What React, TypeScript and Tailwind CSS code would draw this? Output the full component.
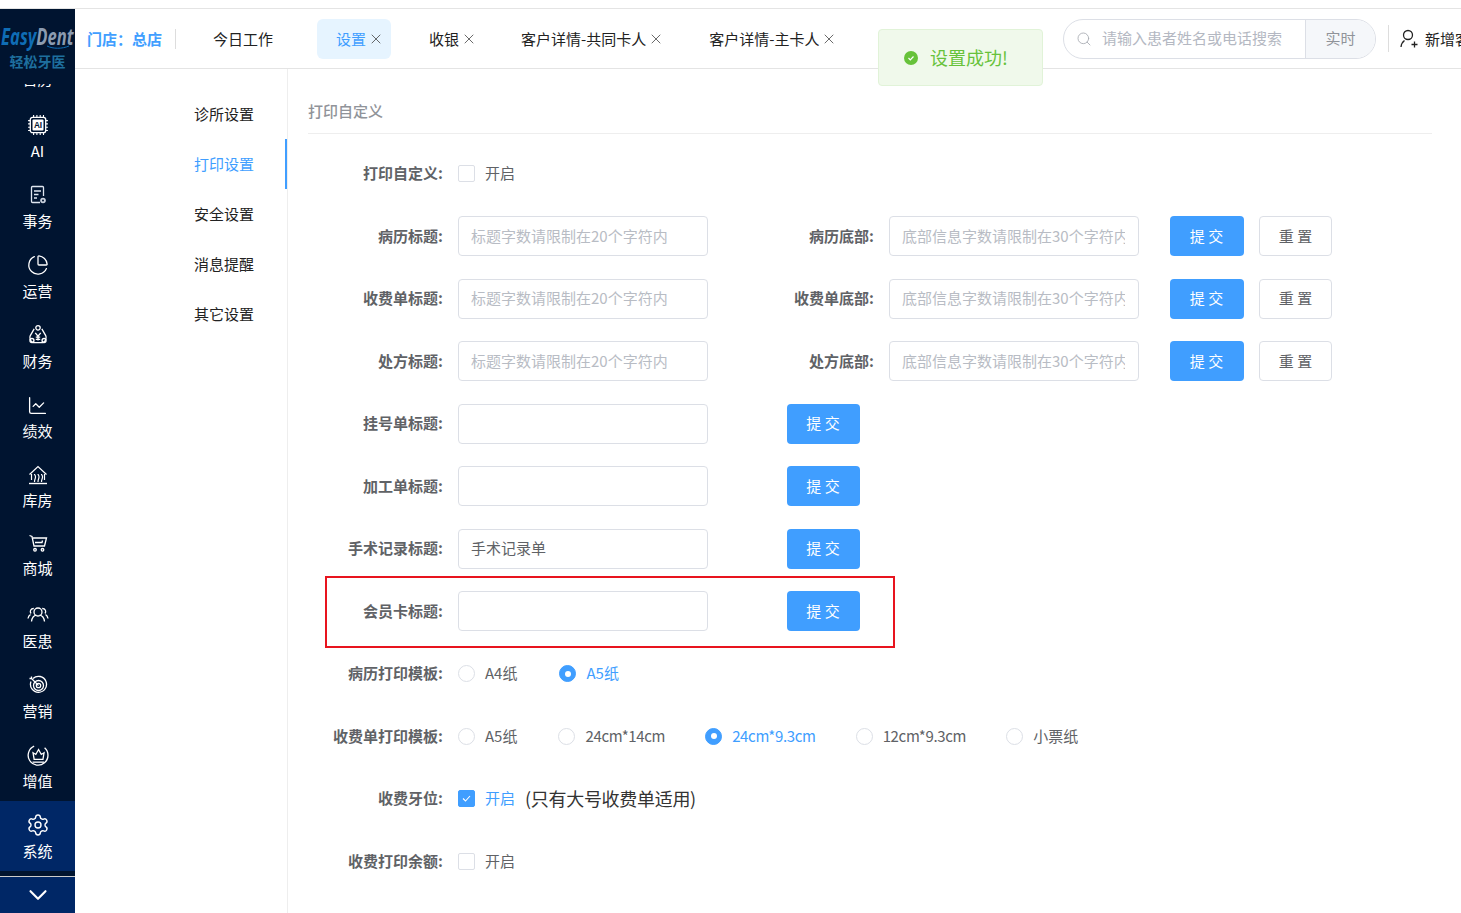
import * as React from 'react';
import { ChevronDown, ChartLine, ChartPie, Search, Settings, X } from 'lucide-react';

const font = 'font-["Noto_Sans_CJK_SC","Noto_Sans",sans-serif]';

function AiIcon() {
  return (
    <svg width="22" height="22" viewBox="0 0 20 20" fill="none" stroke="white" strokeWidth="1.2">
      <rect x="3" y="3" width="14" height="14" rx="2" />
      <path d="M6 1v2M9 1v2M12 1v2M15 1v2M6 17v2M9 17v2M12 17v2M15 17v2M1 6h2M1 9h2M1 12h2M1 15h2M17 6h2M17 9h2M17 12h2M17 15h2" strokeWidth="1" />
      <rect x="5" y="5" width="10" height="10" rx="1" fill="white" stroke="none" />
      <text x="10" y="13" textAnchor="middle" fontSize="7.5" fontWeight="700" fill="#001430" stroke="none" fontFamily="Liberation Sans">AI</text>
    </svg>
  );
}

function AffairIcon() {
  return (
    <svg width="20" height="20" viewBox="0 0 20 20" fill="none" stroke="#dfe6f0" strokeWidth="1.3">
      <path d="M12 17.5H4.500a1 1 0 0 1-1-1V2.500a1 1 0 0 1 1-1h10a1 1 0 0 1 1 1V11" />
      <path d="M6 6h7M6 9.500h4.500M6 13h3" />
      <circle cx="15" cy="15.500" r="2.800" fill="#c7cfdb" stroke="none" />
      <circle cx="15" cy="15.500" r="1" fill="#001430" stroke="none" />
    </svg>
  );
}

function FinanceIcon() {
  return (
    <svg width="22" height="22" viewBox="0 0 20 20" fill="none" stroke="white" strokeWidth="1.200">
      <path d="M6.500 4.500 3 10.500c-1 2 0 5.500 2.500 6.500h9c2.500-1 3.500-4.500 2.500-6.500l-3.500-6" />
      <circle cx="10" cy="3.500" r="2" />
      <circle cx="4.500" cy="15" r="1.800" />
      <circle cx="15.500" cy="15" r="1.800" />
      <path d="M7.500 8 10 11l2.500-3M10 11v4M8 12h4M8 14h4" />
    </svg>
  );
}

function StoreIcon() {
  return (
    <svg width="20" height="20" viewBox="0 0 20 20" fill="none" stroke="white" strokeWidth="1.200">
      <path d="M1.500 9.500 10 1.500l8.500 8M3.500 9v6M16.500 9v6" />
      <path d="M1 18.500h18" strokeWidth="1.400" />
      <path d="M6.500 17c0-3 1-3 1-5s-1-1.500-1-3M10 17c0-3 1-3 1-5s-1-1.500-1-3M13.500 17c0-3 1-3 1-5s-1-1.500-1-3" />
    </svg>
  );
}

function CartIcon() {
  return (
    <svg width="20" height="20" viewBox="0 0 20 20" fill="none" stroke="white" strokeWidth="1.300">
      <path d="M1.500 2.500 4 3.500l2 9.500h10.500l2-8H5" />
      <path d="M7 9.500h7l.5-2" />
      <circle cx="7" cy="16.800" r="1.300" />
      <circle cx="14.500" cy="16.800" r="1.300" />
    </svg>
  );
}

function PatientIcon() {
  return (
    <svg width="22" height="18" viewBox="0 0 22 18" fill="none" stroke="white" strokeWidth="1.300">
      <circle cx="11" cy="6" r="4" />
      <path d="M4.500 15.500c.5-4 3-6 5-6.300M17.500 15.500c-.5-4-3-6-5-6.300" />
      <path d="M6.800 2.500C3.500 2.500 2.500 5.500 4 7.500M1 12.500c.3-1.800 1.200-3.200 2.500-4M15.200 2.500c3.300 0 4.300 3 2.800 5M21 12.500c-.3-1.800-1.200-3.200-2.500-4" />
    </svg>
  );
}

function TargetIcon() {
  return (
    <svg width="20" height="20" viewBox="0 0 20 20" fill="none" stroke="white" strokeWidth="1.300">
      <path d="M5 3.500A8 8 0 1 1 3 6.500" />
      <circle cx="10.500" cy="10.500" r="5" />
      <circle cx="10.500" cy="10.500" r="2.200" />
      <path d="M10.500 10.500 3.500 3.500M1.500 3.500h2v-2" />
    </svg>
  );
}

function CrownIcon() {
  return (
    <svg width="22" height="22" viewBox="0 0 20 20" fill="none" stroke="white" strokeWidth="1.200">
      <path d="M6.500 2A9 9 0 1 0 16 3.500" />
      <path d="M5.500 8 8 9.500 10.500 5l2.500 4.500L15.500 8l-1 6h-8z" />
      <path d="M5 16.500h10.500" />
    </svg>
  );
}

const navItems = [
  { label: '日历', icon: null, cls: 'pt-[32px]', labelCls: 'mt-[5px]' },
  { label: 'AI', icon: <AiIcon />, cls: 'pt-[14px]', labelCls: 'mt-[5px]' },
  { label: '事务', icon: <AffairIcon />, cls: 'pt-[14px]', labelCls: 'mt-[5px]' },
  { label: '运营', icon: <ChartPie size={22} strokeWidth={1.4} />, cls: 'pt-[14px]', labelCls: 'mt-[5px]' },
  { label: '财务', icon: <FinanceIcon />, cls: 'pt-[14px]', labelCls: 'mt-[5px]' },
  { label: '绩效', icon: <ChartLine size={21} strokeWidth={1.5} />, cls: 'pt-[14px]', labelCls: 'mt-[5px]' },
  { label: '库房', icon: <StoreIcon />, cls: 'pt-[14px]', labelCls: 'mt-[4px]' },
  { label: '商城', icon: <CartIcon />, cls: 'pt-[12px]', labelCls: 'mt-[4px]' },
  { label: '医患', icon: <PatientIcon />, cls: 'pt-[14px]', labelCls: 'mt-[5px]' },
  { label: '营销', icon: <TargetIcon />, cls: 'pt-[14px]', labelCls: 'mt-[5px]' },
  { label: '增值', icon: <CrownIcon />, cls: 'pt-[14px]', labelCls: 'mt-[5px]' },
];

function Sidebar() {
  return (
    <aside className="flex h-[904px] w-[75px] shrink-0 flex-col overflow-hidden bg-[#001430] text-white">
      <div className="relative z-10 h-[75px] shrink-0 bg-[#001430] pt-[12px] text-center">
        <div className='flex justify-center whitespace-nowrap font-["Open_Sans",sans-serif] text-[23px] leading-[30px] font-bold italic'>
          <span className="inline-block scale-x-[0.72]">
            <span className="text-[#0f6db5]">Easy</span>
            <span className="text-[#8b9bb0]">Dent</span>
          </span>
        </div>
        <svg width="24" height="5" viewBox="0 0 24 5" fill="none" stroke="#0f6db5" strokeWidth="1" className="absolute top-[36px] left-[46px]">
          <path d="M1 1c6 3 15 3 22 0" />
        </svg>
        <div className="mt-[1px] text-[14px] leading-[18px] font-bold text-[#1e6f9e]">轻松牙医</div>
      </div>
      <div className="min-h-0 flex-1 overflow-hidden">
        <div className="-mt-[53px]">
          {navItems.map((item) => (
            <div key={item.label} className={`flex h-[70px] flex-col items-center ${item.cls}`}>
              {item.icon && <div className="flex h-5 items-center justify-center">{item.icon}</div>}
              <span className={`${item.labelCls} text-[15px] leading-[22px]`}>{item.label}</span>
            </div>
          ))}
        </div>
      </div>
    </aside>
  );
}

function Tab({ label, active, close = true, className = '' }: { label: string; active?: boolean; close?: boolean; className?: string }) {
  return (
    <div className={`flex h-10 shrink-0 items-center rounded-md ${active ? 'bg-[#e6f4ff] text-[#409eff]' : 'text-[#222]'} ${className}`}>
      <span className="mt-[1px]">{label}</span>
      {close && <X size={16} strokeWidth={1.2} className="ml-[2px] text-[#444]" />}
    </div>
  );
}

function Header() {
  return (
    <header className="relative flex h-[60px] shrink-0 items-center border-b border-[#e4e4e4] text-[15px]">
      <span className="mt-[1px] ml-3 font-bold whitespace-nowrap text-[#409eff]">门店：总店</span>
      <span className="mr-[37px] ml-[13px] h-5 w-px bg-[#ddd]" />
      <Tab label="今日工作" close={false} />
      <Tab label="设置" active className="mr-[38px] ml-[44px] w-[74px] pl-[19px]" />
      <Tab label="收银" className="mr-[44px]" />
      <Tab label="客户详情-共同卡人" className="mr-[45px]" />
      <Tab label="客户详情-主卡人" />
      <div className="absolute top-[20px] left-[803px] z-20 flex h-[57px] w-[165px] items-center rounded border border-[#e1f3d8] bg-[#f0f9eb] pl-[25px] text-[18px] text-[#67c23a]">
        <span className="flex h-[14px] w-[14px] items-center justify-center rounded-full bg-[#67c23a]">
          <svg width="8" height="8" viewBox="0 0 8 8" fill="none" stroke="white" strokeWidth="1.200">
            <path d="M1.500 4 3.300 5.800 6.500 2.500" />
          </svg>
        </span>
        <span className="ml-[12px] whitespace-nowrap">设置成功!</span>
      </div>
      <div className="ml-auto flex h-10 w-[313px] shrink-0 overflow-hidden rounded-full border border-[#dcdfe6]">
        <div className="flex w-[241px] items-center pl-[12px] whitespace-nowrap text-[#b4b8c2]">
          <Search size={16} strokeWidth={1.3} className="mr-[10px] text-[#a8abb2]" />
          <span>请输入患者姓名或电话搜索</span>
        </div>
        <div className="flex flex-1 items-center justify-center border-l border-[#dcdfe6] bg-[#f5f7fa] text-[#909399]">实时</div>
      </div>
      <span className="mr-[10px] ml-3 h-[27px] w-px bg-[#ddd]" />
      <div className="flex w-[62px] shrink-0 items-center overflow-hidden whitespace-nowrap text-[#222]">
        <svg width="20" height="20" viewBox="0 0 20 20" fill="none" stroke="#222" strokeWidth="1.300" className="shrink-0">
          <circle cx="9" cy="6" r="4.500" />
          <path d="M2 18c.3-3 1.500-5 3.500-6.500M12.500 15.500h6M15.500 12.500v6" />
        </svg>
        <span className="mt-[2px] ml-[6px]">新增客户</span>
      </div>
    </header>
  );
}

const menu = ['诊所设置', '打印设置', '安全设置', '消息提醒', '其它设置'];

function SideMenu() {
  return (
    <nav className="w-[213px] shrink-0 border-r border-[#eee] pt-5 text-[15px] text-[#222]">
      {menu.map((m, i) => (
        <div key={m} className={`flex h-[50px] items-center pl-[119px] ${i === 1 ? 'border-r-2 border-[#409eff] text-[#409eff]' : ''}`}>
          {m}
        </div>
      ))}
    </nav>
  );
}

function Field({ label, placeholder, value }: { label: string; placeholder?: string; value?: string }) {
  return (
    <>
      <label className="w-[150px] shrink-0 pr-[15px] text-right font-bold whitespace-nowrap text-[#606266]">{label}</label>
      <input
        readOnly
        placeholder={placeholder}
        defaultValue={value}
        className="h-10 w-[250px] shrink-0 rounded border border-[#dcdfe6] pr-[13px] pb-[2px] pl-[12px] text-[#606266] outline-none placeholder:text-[#b8bcc4]"
      />
    </>
  );
}

function Reset() {
  return <button className="ml-[15px] h-10 w-[73px] shrink-0 rounded border border-[#dcdfe6] text-[#606266]">重 置</button>;
}

function DoubleRow({ a, b }: { a: string; b: string }) {
  return (
    <div className="mb-[22.5px] flex h-10 items-center">
      <Field label={a} placeholder="标题字数请限制在20个字符内" />
      <div className="ml-[31px] w-[150px] shrink-0 pr-[15px] text-right font-bold whitespace-nowrap text-[#606266]">{b}</div>
      <input
        readOnly
        placeholder="底部信息字数请限制在30个字符内"
        className="h-10 w-[250px] shrink-0 rounded border border-[#dcdfe6] pr-[13px] pb-[2px] pl-[12px] outline-none placeholder:text-[#b8bcc4]"
      />
      <button className="ml-[31px] h-10 w-[74px] shrink-0 rounded bg-[#409eff] pr-[1px] text-white">提 交</button>
      <Reset />
    </div>
  );
}

function SingleRow({ label, value, marked }: { label: string; value?: string; marked?: boolean }) {
  return (
    <div className="relative mb-[22.5px] flex h-10 items-center">
      <Field label={label} value={value} />
      <button className="ml-[79px] h-10 w-[73px] shrink-0 rounded bg-[#409eff] pr-[1px] text-white">提 交</button>
      {marked && <div className="absolute -top-[15px] left-[17px] h-[72px] w-[570px] border-2 border-[#e8141e]" />}
    </div>
  );
}

function Radio({ label, checked, tight, className = 'mr-10' }: { label: string; checked?: boolean; tight?: boolean; className?: string }) {
  return (
    <div className={`flex items-center whitespace-nowrap ${className} ${checked ? 'text-[#409eff]' : 'text-[#606266]'}`}>
      <span className={`mr-[10px] flex h-[17px] w-[17px] items-center justify-center rounded-full border ${checked ? 'border-[#409eff] bg-[#409eff]' : 'border-[#dcdfe6]'}`}>
        {checked && <span className="h-[6px] w-[6px] rounded-full bg-white" />}
      </span>
      <span className={tight ? 'tracking-[-0.35px]' : ''}>{label}</span>
    </div>
  );
}

function Checkbox({ checked }: { checked?: boolean }) {
  return (
    <div className={`flex items-center ${checked ? 'text-[#409eff]' : 'text-[#606266]'}`}>
      <span className={`mr-[10px] flex h-[17px] w-[17px] items-center justify-center rounded-[2px] border ${checked ? 'border-[#409eff] bg-[#409eff]' : 'border-[#dcdfe6]'}`}>
        {checked && (
          <svg width="11" height="11" viewBox="0 0 11 11" fill="none" stroke="white" strokeWidth="1.100">
            <path d="M2 5.500 4.500 8 9 3" />
          </svg>
        )}
      </span>
      开启
    </div>
  );
}

function OptionRow({ label, children }: { label: string; children: React.ReactNode }) {
  return (
    <div className="mb-[22.5px] flex h-10 items-center">
      <label className="w-[150px] shrink-0 pr-[15px] text-right font-bold whitespace-nowrap text-[#606266]">{label}</label>
      {children}
    </div>
  );
}

function PrintForm() {
  return (
    <main className="w-[1124px] shrink-0 pt-[30px] text-[15px]">
      <div className="h-[35px] border-b border-[#eee] leading-[24px] font-medium text-[#909399]">打印自定义</div>
      <div className="pt-[19.6px]">
        <OptionRow label="打印自定义:">
          <Checkbox />
        </OptionRow>
        <DoubleRow a="病历标题:" b="病历底部:" />
        <DoubleRow a="收费单标题:" b="收费单底部:" />
        <DoubleRow a="处方标题:" b="处方底部:" />
        <SingleRow label="挂号单标题:" />
        <SingleRow label="加工单标题:" />
        <SingleRow label="手术记录标题:" value="手术记录单" />
        <SingleRow label="会员卡标题:" marked />
        <OptionRow label="病历打印模板:">
          <Radio label="A4纸" className="mr-[42px]" />
          <Radio label="A5纸" checked />
        </OptionRow>
        <OptionRow label="收费单打印模板:">
          <Radio label="A5纸" className="mr-[41px]" />
          <Radio label="24cm*14cm" tight />
          <Radio label="24cm*9.3cm" checked tight />
          <Radio label="12cm*9.3cm" tight />
          <Radio label="小票纸" />
        </OptionRow>
        <OptionRow label="收费牙位:">
          <Checkbox checked />
          <span className="ml-[10px] text-[18px] tracking-[-0.3px] text-[#333]">(只有大号收费单适用)</span>
        </OptionRow>
        <OptionRow label="收费打印余额:">
          <Checkbox />
        </OptionRow>
      </div>
    </main>
  );
}

export default function App() {
  return (
    <div className={`h-[913px] w-full overflow-hidden bg-white ${font}`}>
      <div className="h-[9px] border-b border-[#e4e4e4]" />
      <div className="flex h-[904px]">
        <div className="relative w-[75px] shrink-0">
          <Sidebar />
          <div className="absolute bottom-0 left-0 w-[75px] text-white">
            <div className="flex h-[70px] flex-col items-center bg-[#002766] pt-[12px]">
              <Settings size={24} strokeWidth={1.4} />
              <span className="mt-[3px] text-[15px] leading-[22px]">系统</span>
            </div>
            <div className="h-[5px] bg-[#001430]" />
            <div className="flex h-[37px] items-center justify-center border-t border-[#ccc] bg-[#002766]">
              <ChevronDown size={30} strokeWidth={1.7} />
            </div>
          </div>
        </div>
        <div className="flex min-w-0 flex-1 flex-col">
          <Header />
          <div className="flex min-h-0 flex-1">
            <SideMenu />
            <div className="ml-5">
              <PrintForm />
            </div>
          </div>
        </div>
      </div>
    </div>
  );
}
